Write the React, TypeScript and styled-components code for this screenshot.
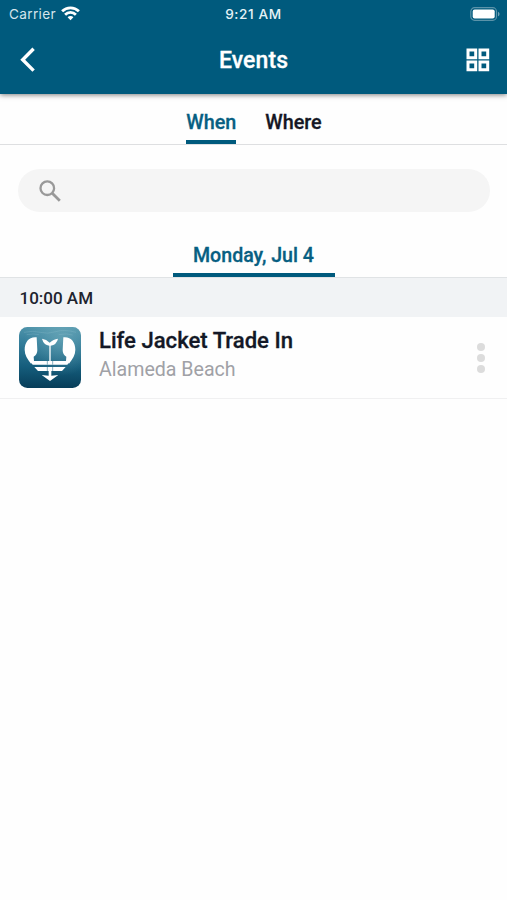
import React from "react";
import styled, { createGlobalStyle } from "styled-components";

const Global = createGlobalStyle`
  * { box-sizing: border-box; }
  body { margin: 0; background: #fefefe; font-family: Roboto, "Liberation Sans", sans-serif; }
  button { border: 0; padding: 0; background: none; font: inherit; display: block; }
  svg { display: block; }
`;

const Screen = styled.div`
  width: 507px;
  height: 900px;
  overflow: hidden;
  display: flex;
  flex-direction: column;
`;

const Header = styled.header`
  height: 94px;
  flex: none;
  background: #005a7d;
  color: #fff;
  box-shadow: 0 1px 5px rgba(0, 0, 0, 0.5);
`;

const StatusBar = styled.div`
  height: 27px;
  display: grid;
  grid-template-columns: 1fr auto 1fr;
  align-items: center;
  padding: 0 7px 0 9px;
  font-family: Inter, sans-serif;
`;

const Carrier = styled.div`
  display: flex;
  align-items: center;
  gap: 5px;
  font-size: 13.6px;
  letter-spacing: 0.35px;
  color: #d5e5ec;
`;

const Clock = styled.div`
  font-size: 13.6px;
  letter-spacing: 0.6px;
  margin-right: 2px;
  font-weight: 500;
  color: #e6f2f6;
`;

const Battery = styled.div`
  justify-self: end;
`;

const NavBar = styled.div`
  height: 66px;
  display: grid;
  grid-template-columns: 1fr auto 1fr;
  align-items: center;
  padding: 0 17px 0 20px;
`;

const Title = styled.h1`
  margin: 2px 3px 0 0;
  font-size: 23px;
  line-height: 28px;
  font-weight: 500;
  letter-spacing: 0.1px;
  -webkit-text-stroke: 0.3px currentColor;
`;

const GridButton = styled.button`
  justify-self: end;
  color: #fff;
`;

const BackButton = styled.button`
  color: #fff;
`;

const Tabs = styled.nav`
  height: 51px;
  flex: none;
  display: flex;
  justify-content: center;
  align-items: flex-start;
  gap: 29px;
  padding: 5px 0 0 1px;
  border-bottom: 1px solid #dedfe1;
`;

const Tab = styled.button<{ $active?: boolean }>`
  height: 45px;
  padding-top: 6px;
  font-size: 19.8px;
  font-weight: 500;
  -webkit-text-stroke: 0.3px currentColor;
  color: ${(p) => (p.$active ? "#075f82" : "#151724")};
  border-bottom: 4px solid ${(p) => (p.$active ? "#005a7d" : "transparent")};
`;

const Search = styled.label`
  height: 43px;
  flex: none;
  margin: 24px 17px 0 18px;
  padding-left: 21px;
  border-radius: 22px;
  background: #f5f5f5;
  display: flex;
  align-items: center;
  gap: 12px;
`;

const SearchInput = styled.input`
  flex: 1;
  border: 0;
  outline: 0;
  background: transparent;
  font: 18px Roboto, sans-serif;
`;

const DateStrip = styled.div`
  height: 66px;
  flex: none;
  display: flex;
  justify-content: center;
  align-items: flex-end;
  border-bottom: 1px solid #e0e3e5;
`;

const DateTab = styled.button`
  width: 162px;
  height: 42px;
  padding-top: 2px;
  font-size: 19.6px;
  font-weight: 500;
  -webkit-text-stroke: 0.3px currentColor;
  color: #075f82;
  border-bottom: 4px solid #005a7d;
`;

const TimeHeading = styled.h2`
  margin: 0;
  height: 39px;
  flex: none;
  padding-left: 19.5px;
  background: #f1f3f5;
  color: #20232e;
  font-size: 17px;
  line-height: 40px;
  font-weight: 500;
`;

const EventRow = styled.article`
  height: 82px;
  flex: none;
  display: flex;
  padding: 10px 22px 0 19px;
  border-bottom: 1px solid #f0f0f1;
`;

const EventText = styled.div`
  flex: 1;
  padding-left: 18px;
`;

const EventName = styled.h3`
  margin: 0;
  color: #131826;
  font-size: 22.1px;
  line-height: 27px;
  font-weight: 500;
  -webkit-text-stroke: 0.3px currentColor;
`;

const Place = styled.p`
  margin: 3px 0 0;
  color: #a0a1a6;
  font-size: 19.6px;
  line-height: 25px;
`;

const MoreButton = styled.button`
  display: flex;
  flex-direction: column;
  align-items: center;
  gap: 3px;
  height: 30px;
  margin-top: 16px;
`;

const Dot = styled.span`
  width: 8px;
  height: 8px;
  border-radius: 50%;
  background: #dcdcdc;
`;

const WifiIcon = () => (
  <svg width="19" height="15" viewBox="0 0 19 15" fill="none" stroke="#fff" strokeWidth="2.8">
    <path d="M1.1 5.3C5.8.6 13.2.6 17.9 5.3" />
    <path d="M4.1 8.7c3-3 7.8-3 10.8 0" />
    <path d="M9.5 14.2l-2.9-2.9c1.6-1.6 4.2-1.6 5.8 0z" fill="#fff" stroke="none" />
  </svg>
);

const BatteryIcon = () => (
  <svg width="30" height="14" viewBox="0 0 30 14">
    <rect x="0.8" y="0.7" width="25.7" height="12.6" rx="3.8" fill="none" stroke="#5b93a9" strokeWidth="1.2" />
    <rect x="2.7" y="2.5" width="22" height="9" rx="2" fill="#fff" />
    <path d="M28 4.7c2 .8 2 3.8 0 4.6z" fill="#70a1b4" />
  </svg>
);

const BackIcon = () => (
  <svg width="16" height="26" viewBox="0 0 16 26" fill="none" stroke="currentColor" strokeWidth="3.4">
    <path d="M13.6 1.8L2.7 12.7 13.6 23.6" />
  </svg>
);

const GridIcon = () => (
  <svg width="24" height="24" viewBox="0 0 24 24" fill="none" stroke="currentColor" strokeWidth="3">
    <path d="M2 2h7.7v7.7H2zM14 2h7.7v7.7H14zM2 14h7.7v7.7H2zM14 14h7.7v7.7H14z" />
  </svg>
);

const SearchIcon = () => (
  <svg width="22" height="22" viewBox="0 0 22 22" fill="none" stroke="#999" strokeWidth="2.3">
    <circle cx="8.3" cy="8.2" r="6.8" />
    <path d="M13 13l7.8 7.7" strokeWidth="2.8" />
  </svg>
);

const JacketLogo = () => (
  <svg width="62" height="61" viewBox="27 27 186 183">
    <defs>
      <linearGradient id="sea" x1="0" y1="0" x2="0" y2="1">
        <stop offset="0" stopColor="#4f93aa" />
        <stop offset="0.25" stopColor="#347e9b" />
        <stop offset="0.65" stopColor="#155d7c" />
        <stop offset="1" stopColor="#073d59" />
      </linearGradient>
      <radialGradient id="light" cx="0.68" cy="0.2" r="0.6">
        <stop offset="0" stopColor="#8bc1cb" stopOpacity="0.45" />
        <stop offset="1" stopColor="#8bc1cb" stopOpacity="0" />
      </radialGradient>
    </defs>
    <rect x="27" y="27" width="186" height="183" rx="25" fill="url(#sea)" />
    <rect x="27" y="27" width="186" height="183" rx="25" fill="url(#light)" />
    <path d="M42 43q28-6 49 0t46-2 61 2M50 50q20-4 37 0M146 50q24-5 42 1" fill="none" stroke="#9bc8d2" strokeWidth="2" opacity="0.35" />
    <g fill="#fff">
      <path d="M80 58C58 55 44 72 44 95c0 15 8 28 19 42l9-8-1-13q11-6 11-20z" />
      <path d="M160 58c22-3 36 14 36 37 0 15-8 28-19 42l-9-8 1-13q-11-6-11-20z" />
      <path d="M96 62q13 2 23 12 11-11 25-12-4 18-22 21v50h-4V83Q101 81 96 62z" />
      <path d="M60 129h120l-8 11H68zM73 147h94l-11 12H84zM95 171l21 2v-17h8v17l21-2-25 18z" />
    </g>
    <g fill="none" stroke="#4b8ba3" strokeWidth="2">
      <path d="M112 129v11M128 129v11M112 147v12M128 147v12" />
    </g>
  </svg>
);

export default function App() {
  return (
    <>
      <Global />
      <Screen>
        <Header>
          <StatusBar>
            <Carrier>
              Carrier
              <WifiIcon />
            </Carrier>
            <Clock>9:21 AM</Clock>
            <Battery>
              <BatteryIcon />
            </Battery>
          </StatusBar>
          <NavBar>
            <BackButton aria-label="Back">
              <BackIcon />
            </BackButton>
            <Title>Events</Title>
            <GridButton aria-label="Grid view">
              <GridIcon />
            </GridButton>
          </NavBar>
        </Header>
        <Tabs>
          <Tab $active>When</Tab>
          <Tab>Where</Tab>
        </Tabs>
        <Search>
          <SearchIcon />
          <SearchInput aria-label="Search" />
        </Search>
        <DateStrip>
          <DateTab>Monday, Jul 4</DateTab>
        </DateStrip>
        <TimeHeading>10:00 AM</TimeHeading>
        <EventRow>
          <JacketLogo />
          <EventText>
            <EventName>Life Jacket Trade In</EventName>
            <Place>Alameda Beach</Place>
          </EventText>
          <MoreButton aria-label="More">
            <Dot />
            <Dot />
            <Dot />
          </MoreButton>
        </EventRow>
      </Screen>
    </>
  );
}
